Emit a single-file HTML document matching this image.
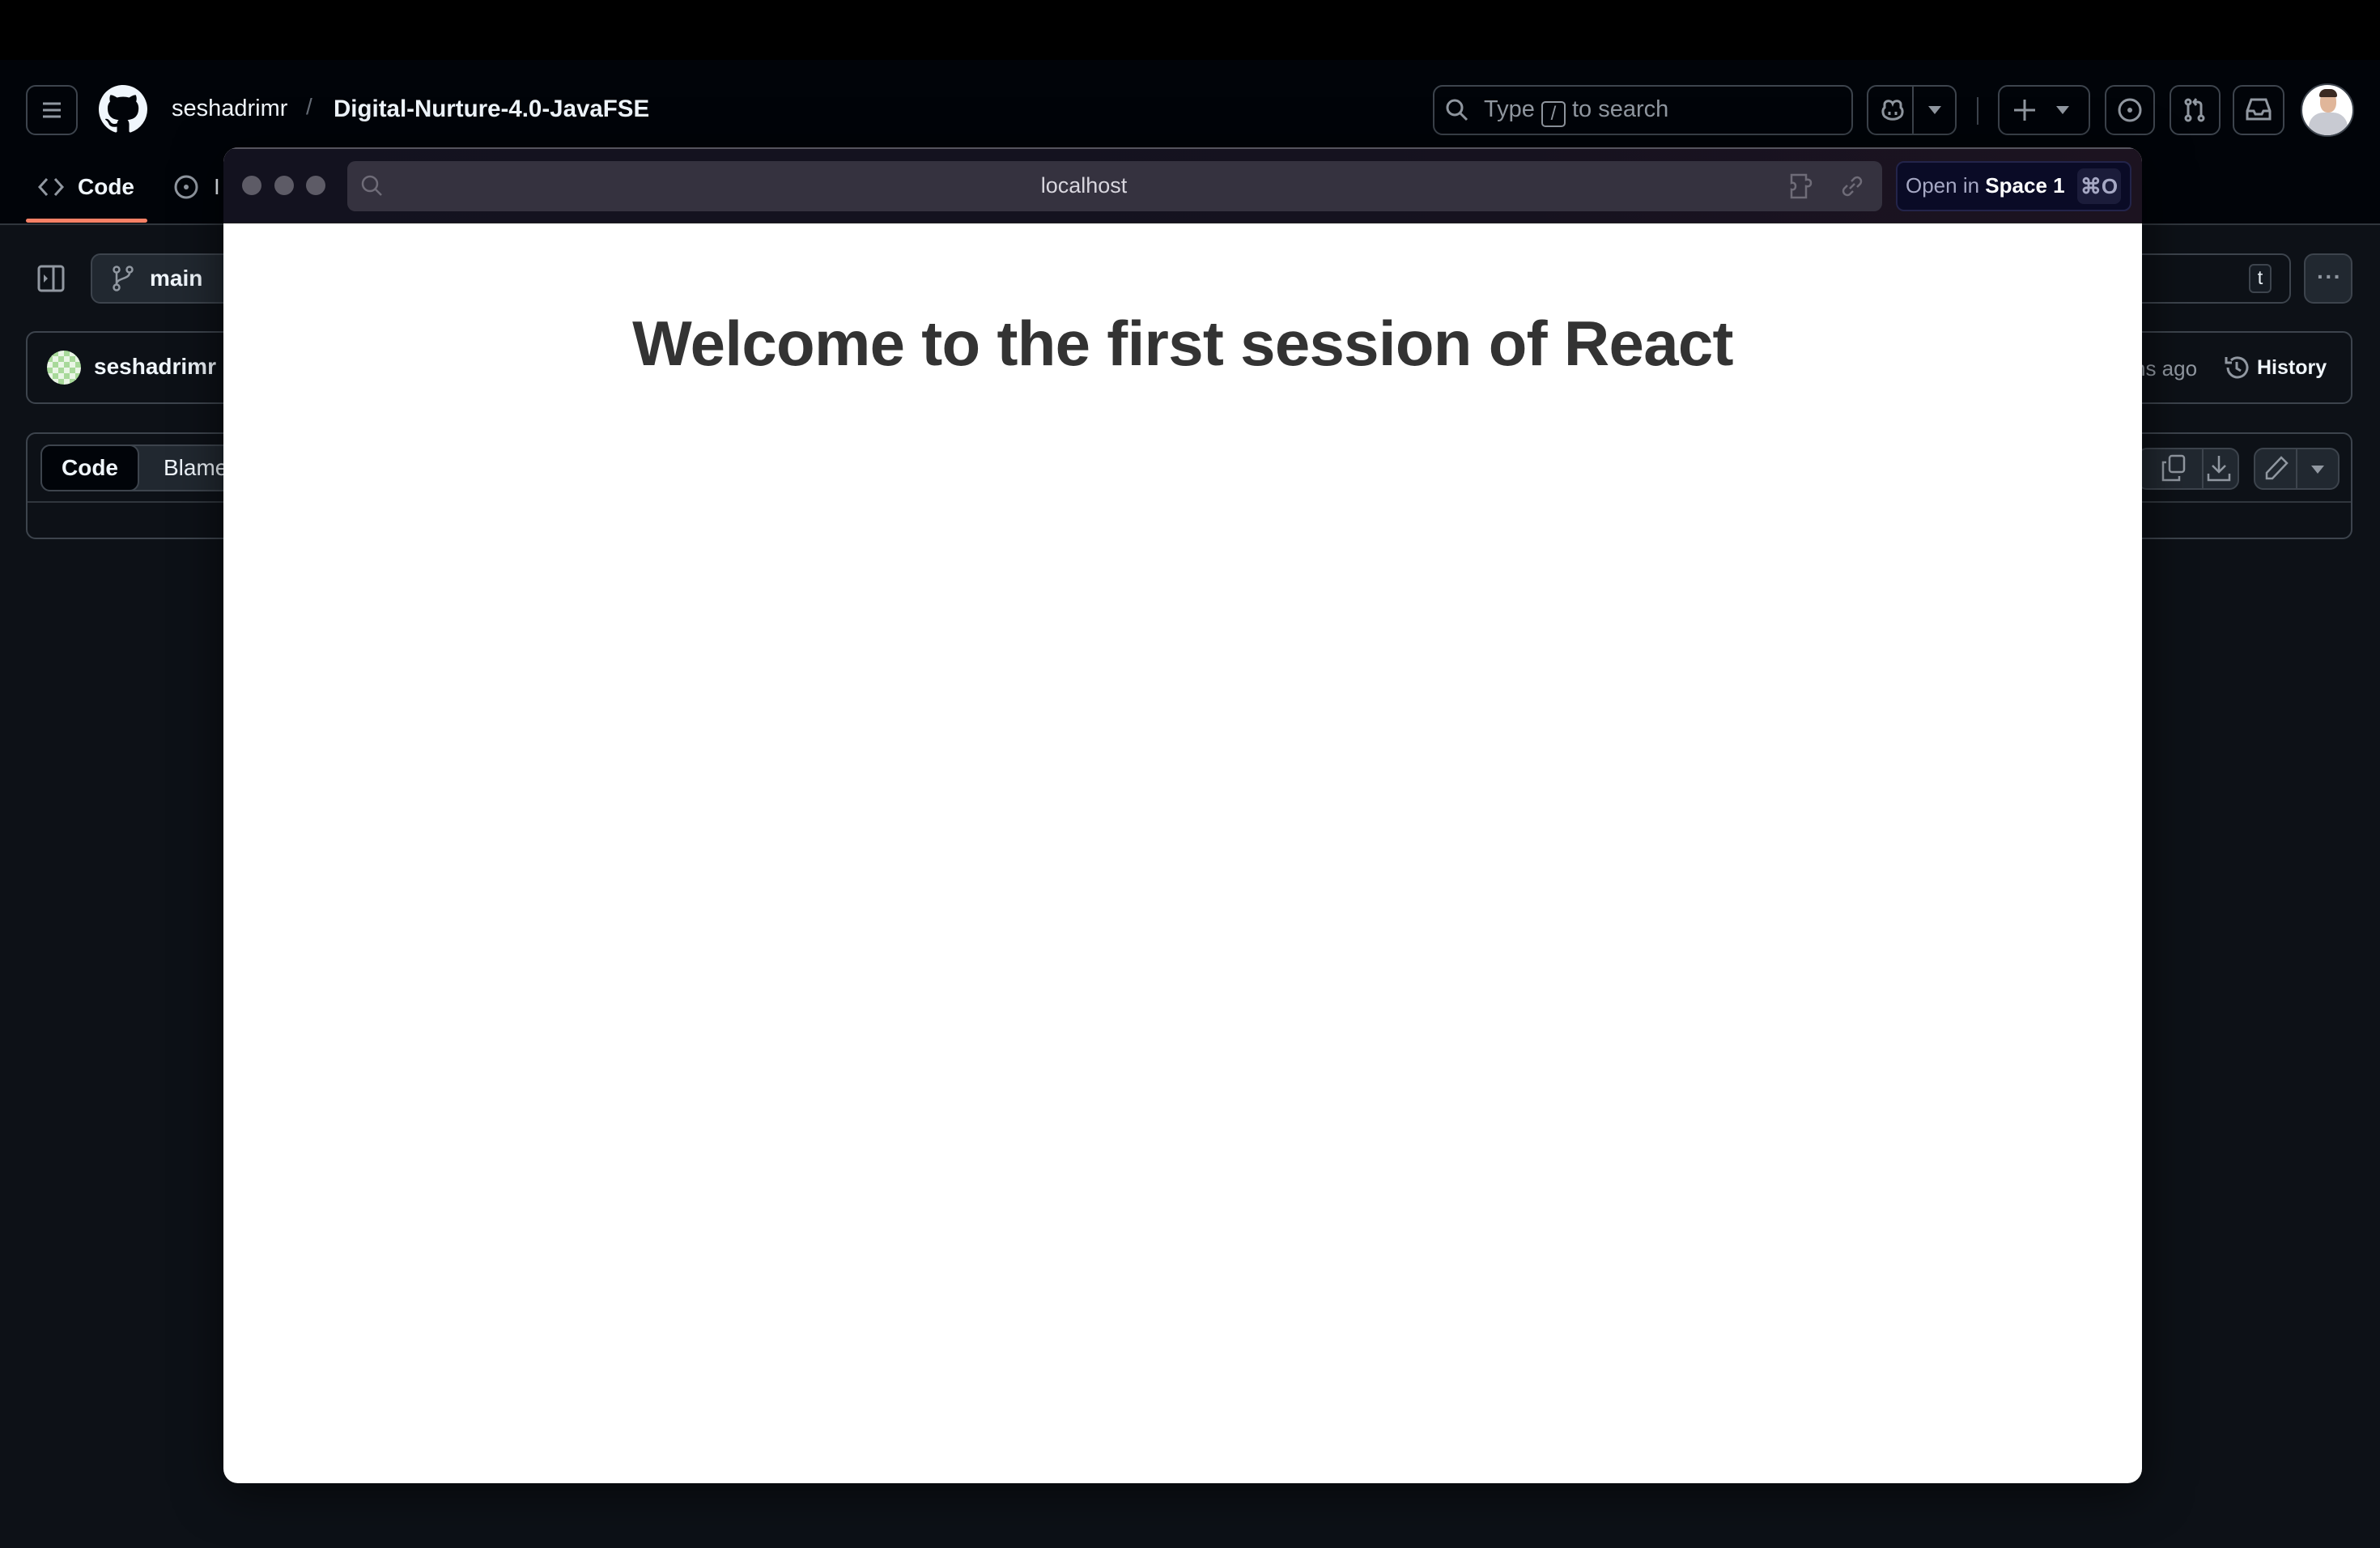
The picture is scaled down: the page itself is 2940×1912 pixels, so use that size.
<!DOCTYPE html>
<html><head><meta charset="utf-8"><style>
*{margin:0;padding:0;box-sizing:border-box}
body{width:2940px;height:1912px;background:#0d1117;font-family:"Liberation Sans",sans-serif;color:#e6edf3;position:relative;overflow:hidden}
.a{position:absolute}
.btn{position:absolute;border:2px solid #3d444d;border-radius:12px;background:#010409}
.t{position:absolute;white-space:nowrap;font-size:28px}
svg{position:absolute}
</style></head><body>
<div class="a" style="left:0;top:0;width:2940px;height:74px;background:#000"></div>
<div class="a" style="left:0;top:74px;width:2940px;height:204px;background:#010409;border-bottom:2px solid #30363d"></div>
<!-- header -->
<div class="btn" style="left:32px;top:105px;width:64px;height:62px"></div>
<svg style="left:50px;top:122px" width="28" height="28" viewBox="0 0 28 28"><path d="M3 6h22M3 14h22M3 22h22" stroke="#9198a1" stroke-width="3"/></svg>
<svg style="left:122px;top:105px" width="60" height="60" viewBox="0 0 16 16"><path fill="#f0f6fc" d="M8 0C3.580 0 0 3.58 0 8c0 3.54 2.290 6.53 5.47 7.59.4.07.55-.17.55-.38 0-.19-.01-.82-.01-1.49-2.01.37-2.530-.49-2.690-.94-.09-.23-.48-.94-.82-1.13-.28-.15-.68-.52-.01-.53.63-.01 1.080.58 1.230.82.72 1.210 1.870.87 2.330.66.07-.52.28-.87.51-1.07-1.780-.2-3.640-.89-3.640-3.95 0-.87.31-1.59.82-2.15-.08-.2-.36-1.02.08-2.12 0 0 .67-.21 2.2.82.64-.18 1.32-.27 2-.27.68 0 1.36.09 2 .27 1.53-1.04 2.2-.82 2.2-.82.44 1.1.16 1.92.08 2.12.51.56.82 1.27.82 2.15 0 3.07-1.87 3.75-3.65 3.95.29.25.54.73.54 1.48 0 1.07-.01 1.93-.01 2.2 0 .21.15.46.55.38A8.013 8.013 0 0016 8c0-4.42-3.58-8-8-8z"/></svg>
<div class="t" style="left:212px;top:118px;color:#f0f6fc;font-size:29px">seshadrimr</div>
<div class="t" style="left:378px;top:116px;color:#656c76">/</div>
<div class="t" style="left:412px;top:118px;color:#f0f6fc;font-weight:bold;font-size:29.5px">Digital-Nurture-4.0-JavaFSE</div>
<div class="btn" style="left:1770px;top:105px;width:519px;height:62px"></div>
<svg style="left:1784px;top:120px" width="32" height="32" viewBox="0 0 32 32"><circle cx="13" cy="13" r="9" stroke="#9198a1" stroke-width="3" fill="none"/><path d="M20 20l8 8" stroke="#9198a1" stroke-width="3"/></svg>
<div class="t" style="left:1833px;top:119px;color:#9198a1;font-size:29px">Type <span style="display:inline-block;border:2px solid #9198a1;border-radius:5px;width:30px;height:32px;text-align:center;font-size:24px;line-height:28px;vertical-align:-4px">/</span> to search</div>
<div class="btn" style="left:2306px;top:105px;width:111px;height:62px"></div>
<div class="a" style="left:2362px;top:107px;width:2px;height:58px;background:#3d444d"></div>
<svg style="left:2321px;top:119px" width="34" height="34"><path d="M7 10c0-5 8-6 10-1 2-5 10-4 10 1v4c3 2 3 10-2 12-4 3-12 3-16 0-5-2-5-10-2-12z" stroke="#9198a1" stroke-width="3" fill="none"/><path d="M13 19v4M21 19v4" stroke="#9198a1" stroke-width="3"/></svg>
<svg style="left:2382px;top:131px" width="16" height="10"><path d="M0 0h16L8 10z" fill="#9198a1"/></svg>
<div class="a" style="left:2442px;top:120px;width:2px;height:34px;background:#3d444d"></div>
<div class="btn" style="left:2468px;top:105px;width:114px;height:62px"></div>
<svg style="left:2486px;top:121px" width="30" height="30"><path d="M15 2v26M2 15h26" stroke="#9198a1" stroke-width="3"/></svg>
<svg style="left:2540px;top:131px" width="16" height="10"><path d="M0 0h16L8 10z" fill="#9198a1"/></svg>
<div class="btn" style="left:2600px;top:105px;width:62px;height:62px"></div>
<svg style="left:2613px;top:118px" width="36" height="36"><circle cx="18" cy="18" r="13" stroke="#9198a1" stroke-width="3" fill="none"/><circle cx="18" cy="18" r="3" fill="#9198a1"/></svg>
<div class="btn" style="left:2680px;top:105px;width:63px;height:62px"></div>
<svg style="left:2693px;top:118px" width="36" height="36"><circle cx="10" cy="8" r="3" stroke="#9198a1" stroke-width="3" fill="none"/><circle cx="10" cy="28" r="3" stroke="#9198a1" stroke-width="3" fill="none"/><circle cx="26" cy="28" r="3" stroke="#9198a1" stroke-width="3" fill="none"/><path d="M10 11v14M26 25V12c0-3-2-4-5-4h-3M20 4l-3 4 3 4" stroke="#9198a1" stroke-width="3" fill="none"/></svg>
<div class="btn" style="left:2758px;top:105px;width:64px;height:62px"></div>
<svg style="left:2772px;top:119px" width="36" height="34"><path d="M4 18l5-14h18l5 14v10H4zM4 18h8l2 4h8l2-4h8" stroke="#9198a1" stroke-width="3" fill="none"/></svg>
<div class="a" style="left:2842px;top:103px;width:66px;height:66px;border-radius:50%;background:#fff;overflow:hidden;border:2px solid #3d444d">
<div class="a" style="left:22px;top:8px;width:20px;height:26px;border-radius:45%;background:#e0b69a"></div>
<div class="a" style="left:21px;top:5px;width:22px;height:10px;border-radius:8px 8px 2px 2px;background:#3a2a22"></div>
<div class="a" style="left:8px;top:34px;width:48px;height:34px;border-radius:18px 18px 0 0;background:#c8cad2"></div></div>
<!-- tabs -->
<svg style="left:46px;top:217px" width="34" height="28"><path d="M12 4L3 14l9 10M22 4l9 10-9 10" stroke="#9198a1" stroke-width="3" fill="none"/></svg>
<div class="t" style="left:96px;top:215px;font-weight:bold;color:#f0f6fc">Code</div>
<div class="a" style="left:32px;top:270px;width:150px;height:5px;border-radius:3px;background:#f78166"></div>
<svg style="left:213px;top:214px" width="34" height="34"><circle cx="17" cy="17" r="13" stroke="#9198a1" stroke-width="3" fill="none"/><circle cx="17" cy="17" r="3" fill="#9198a1"/></svg>
<div class="t" style="left:264px;top:215px;color:#f0f6fc">I</div>
<!-- body row -->
<svg style="left:46px;top:327px" width="34" height="34"><rect x="2" y="2" width="30" height="30" rx="3" stroke="#9198a1" stroke-width="3" fill="none"/><path d="M20 2v30" stroke="#9198a1" stroke-width="3"/><path d="M8 12l5 5-5 5z" fill="#9198a1"/></svg>
<div class="btn" style="left:112px;top:313px;width:200px;height:62px;background:#212830"></div>
<svg style="left:138px;top:327px" width="28" height="34"><circle cx="6" cy="6" r="3.5" stroke="#9198a1" stroke-width="2.5" fill="none"/><circle cx="6" cy="28" r="3.5" stroke="#9198a1" stroke-width="2.5" fill="none"/><circle cx="22" cy="6" r="3.5" stroke="#9198a1" stroke-width="2.5" fill="none"/><path d="M6 10v14M22 10c0 8-16 6-16 14" stroke="#9198a1" stroke-width="2.5" fill="none"/></svg>
<div class="t" style="left:185px;top:328px;font-weight:bold;color:#f0f6fc">main</div>
<div class="btn" style="left:2500px;top:313px;width:330px;height:62px;background:#0d1117"></div>
<div class="a" style="left:2778px;top:326px;width:28px;height:36px;border:2px solid #3d444d;border-radius:6px;background:#151b23;font-size:24px;text-align:center;line-height:32px;color:#e6edf3">t</div>
<div class="btn" style="left:2846px;top:313px;width:60px;height:62px;background:#212830"></div>
<div class="t" style="left:2862px;top:326px;color:#9198a1;font-weight:bold;letter-spacing:1px">···</div>
<div class="btn" style="left:32px;top:409px;width:2874px;height:90px;background:#0d1117"></div>
<div class="a" style="left:58px;top:433px;width:42px;height:42px;border-radius:50%;background:repeating-conic-gradient(#a8d99a 0 25%,#eaf6e6 0 50%) 0 0/14px 14px"></div>
<div class="t" style="left:116px;top:437px;font-weight:bold;font-size:28px;color:#f0f6fc">seshadrimr</div>
<div class="t" style="left:2636px;top:440px;font-size:26px;color:#9198a1">ns ago</div>
<svg style="left:2746px;top:437px" width="34" height="34"><path d="M6 17a12 12 0 1 0 4-9M4 4v7h7" stroke="#9198a1" stroke-width="3" fill="none"/><path d="M17 10v8l5 3" stroke="#9198a1" stroke-width="3" fill="none"/></svg>
<div class="t" style="left:2788px;top:440px;font-size:25px;font-weight:bold;color:#f0f6fc">History</div>
<div class="btn" style="left:32px;top:534px;width:2874px;height:132px;background:#0d1117"></div>
<div class="a" style="left:34px;top:619px;width:2870px;height:2px;background:#30363d"></div>
<div class="btn" style="left:50px;top:549px;width:240px;height:58px;background:#212830"></div>
<div class="a" style="left:50px;top:549px;width:122px;height:58px;border:2px solid #3d444d;border-radius:12px;background:#010409"></div>
<div class="t" style="left:76px;top:562px;font-weight:bold;color:#f0f6fc">Code</div>
<div class="t" style="left:202px;top:562px;color:#f0f6fc">Blame</div>
<div class="btn" style="left:2640px;top:553px;width:126px;height:52px;background:#212830"></div>
<div class="a" style="left:2720px;top:555px;width:2px;height:48px;background:#3d444d"></div>
<svg style="left:2668px;top:561px" width="34" height="36"><rect x="12" y="2" width="18" height="20" rx="3" stroke="#9198a1" stroke-width="2.5" fill="none"/><path d="M8 10H4v22h20v-5" stroke="#9198a1" stroke-width="2.5" fill="none"/></svg>
<svg style="left:2724px;top:561px" width="34" height="36"><path d="M17 2v20M9 14l8 8 8-8M4 24v8h26v-8" stroke="#9198a1" stroke-width="2.5" fill="none"/></svg>
<div class="btn" style="left:2784px;top:553px;width:106px;height:52px;background:#212830"></div>
<div class="a" style="left:2836px;top:555px;width:2px;height:48px;background:#3d444d"></div>
<svg style="left:2796px;top:561px" width="34" height="36"><path d="M22 4l7 7L11 30H4v-7z" stroke="#9198a1" stroke-width="2.5" fill="none"/></svg>
<svg style="left:2855px;top:575px" width="16" height="10"><path d="M0 0h16L8 10z" fill="#9198a1"/></svg>
<!-- browser overlay -->
<div class="a" style="left:276px;top:182px;width:2370px;height:1650px;border-radius:18px;overflow:hidden;background:#fff;box-shadow:0 10px 60px rgba(0,0,0,.6)">
<div class="a" style="left:0;top:0;width:2370px;height:94px;background:linear-gradient(90deg,#13121f,#15121f 60%,#1c1320);border-bottom:1px solid #222"></div>
<div class="a" style="left:0;top:0;width:2370px;height:2px;background:#55545e"></div>
<div class="a" style="left:23px;top:35px;width:24px;height:24px;border-radius:50%;background:#5d5b66"></div>
<div class="a" style="left:63px;top:35px;width:24px;height:24px;border-radius:50%;background:#5d5b66"></div>
<div class="a" style="left:102px;top:35px;width:24px;height:24px;border-radius:50%;background:#5d5b66"></div>
<div class="a" style="left:153px;top:17px;width:1896px;height:62px;border-radius:10px;background:#35323f"></div>
<svg style="left:168px;top:32px" width="32" height="32"><circle cx="13" cy="13" r="9" stroke="#6f6c78" stroke-width="2.5" fill="none"/><path d="M20 20l7 7" stroke="#6f6c78" stroke-width="2.5"/></svg>
<div class="t" style="left:0;width:2126px;text-align:center;top:32px;font-size:27px;color:#d8d6de">localhost</div>
<svg style="left:1933px;top:30px" width="40" height="36"><path d="M4 4h18v6c4-1 6 1 6 4s-2 5-6 4v14H4V22c3 1 5-1 5-4s-2-5-5-4z" stroke="#6f6c78" stroke-width="2.5" fill="none"/></svg>
<svg style="left:1994px;top:30px" width="36" height="36"><path d="M15 21l6-6M12 17l-4 4a5 5 0 0 0 7 7l4-4M24 19l4-4a5 5 0 0 0-7-7l-4 4" stroke="#6f6c78" stroke-width="2.5" fill="none"/></svg>
<div class="a" style="left:2066px;top:17px;width:291px;height:62px;border-radius:10px;background:#0a0b26;border:2px solid #23244a"></div>
<div class="t" style="left:2078px;top:32px;font-size:26px;color:#a6a8c4">Open in <b style="color:#fff">Space 1</b></div>
<div class="a" style="left:2290px;top:26px;width:54px;height:44px;border-radius:8px;background:#1b1c3a;color:#a6a8c4;font-size:26px;font-weight:bold;text-align:center;line-height:44px">⌘O</div>
<div class="t" style="left:0;width:2370px;text-align:center;top:197px;font-size:78px;font-weight:bold;color:#333;letter-spacing:-0.7px">Welcome to the first session of React</div>
</div>
</body></html>
